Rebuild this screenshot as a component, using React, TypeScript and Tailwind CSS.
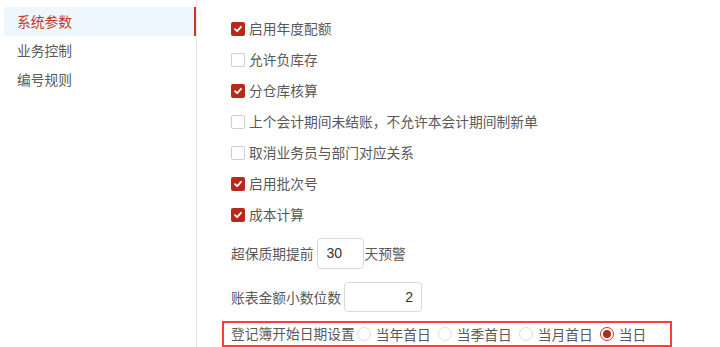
import React from "react";

const font = { fontFamily: '"Microsoft YaHei", "Noto Sans CJK SC", "Noto Sans", sans-serif' };

function Check({ checked, label }: { checked: boolean; label: string }) {
  return (
    <div className="flex h-[31px] items-center">
      {checked ? (
        <span className="flex h-[14px] w-[14px] items-center justify-center rounded-[2px] bg-[#b8291c]">
          <svg width="10" height="10" viewBox="0 0 10 10">
            <path d="M2 5.2 L4.2 7.2 L8 2.8" fill="none" stroke="#fff" strokeWidth="1.8" strokeLinecap="round" strokeLinejoin="round" />
          </svg>
        </span>
      ) : (
        <span className="h-[14px] w-[14px] rounded-[2px] border border-[#cfcfcf] bg-white" />
      )}
      <span className="ml-[4px] text-[13.75px] text-[#595959]">{label}</span>
    </div>
  );
}

function Radio({ checked, label }: { checked: boolean; label: string }) {
  return (
    <span className="flex items-center">
      {checked ? (
        <span className="flex h-[14px] w-[14px] items-center justify-center rounded-full border border-[#c0392b] bg-white">
          <span className="h-[8px] w-[8px] rounded-full bg-[#b8291c]" />
        </span>
      ) : (
        <span className="h-[14px] w-[14px] rounded-full border border-[#dcdcdc] bg-white" />
      )}
      <span className="ml-[5px] text-[13.75px] text-[#595959]">{label}</span>
    </span>
  );
}

export default function App() {
  return (
    <div className="flex h-[347px] w-[720px] overflow-hidden bg-white" style={font}>
      <div className="w-[197px] shrink-0 border-r border-[#e6e6e6] pl-[4px] pt-[7px]">
        <div className="flex h-[29px] items-center border-r-2 border-[#c0392b] bg-[#eef7fe] pl-[13px] text-[13.75px] text-[#c0392b]">
          系统参数
        </div>
        <div className="flex h-[29px] items-center pl-[13px] text-[13.75px] text-[#595959]">业务控制</div>
        <div className="flex h-[29px] items-center pl-[13px] text-[13.75px] text-[#595959]">编号规则</div>
      </div>
      <div className="flex flex-col pl-[25px] pt-[13px]">
        <div className="pl-[9px]">
          <Check checked label="启用年度配额" />
          <Check checked={false} label="允许负库存" />
          <Check checked label="分仓库核算" />
          <Check checked={false} label="上个会计期间未结账，不允许本会计期间制新单" />
          <Check checked={false} label="取消业务员与部门对应关系" />
          <Check checked label="启用批次号" />
          <Check checked label="成本计算" />
          <div className="mt-[8px] flex h-[31px] items-center text-[13.75px] text-[#595959]">
            <span>超保质期提前</span>
            <span className="ml-[3px] flex h-[31px] w-[47px] items-center rounded-[4px] border border-[#d9d9d9] pl-[9px] text-[14px] text-[#333]" style={{ fontFamily: '"Liberation Sans", Arial, sans-serif' }}>
              30
            </span>
            <span className="ml-[1px]">天预警</span>
          </div>
          <div className="mt-[13px] flex h-[30px] items-center text-[13.75px] text-[#595959]">
            <span>账表金额小数位数</span>
            <span className="ml-[3px] flex h-[30px] w-[78px] items-center justify-end rounded-[4px] border border-[#d9d9d9] pr-[8px] text-[14px] text-[#333]" style={{ fontFamily: '"Liberation Sans", Arial, sans-serif' }}>
              2
            </span>
          </div>
        </div>
        <div className="mt-[9px] flex h-[32px] w-[450px] items-start gap-[2px] border-2 border-[#ff3b3b] pl-[7px]">
          <span className="text-[13.75px] text-[#595959]">登记簿开始日期设置</span>
          <div className="flex items-center gap-[7px] pt-[1px]">
            <Radio checked={false} label="当年首日" />
            <Radio checked={false} label="当季首日" />
            <Radio checked={false} label="当月首日" />
            <Radio checked label="当日" />
          </div>
        </div>
      </div>
    </div>
  );
}
